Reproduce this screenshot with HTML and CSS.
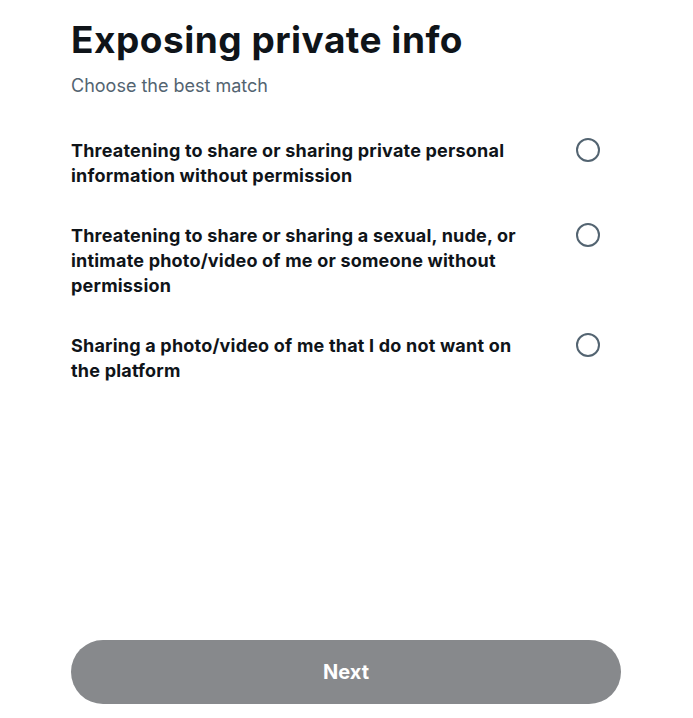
FILE: index.html
```html
<!doctype html>
<html>
<head>
<meta charset="utf-8">
<title>Exposing private info</title>
<link rel="stylesheet" href="styles.css">
</head>
<body>
<div class="page">
	<div class="head">
		<h1 class="title">Exposing private info</h1>
		<p class="sub">Choose the best match</p>
	</div>
	<ul class="opts">
		<li class="opt">
			<span class="txt">Threatening to share or sharing private personal information without permission</span>
			<span class="radio"></span>
		</li>
		<li class="opt">
			<span class="txt">Threatening to share or sharing a sexual, nude, or intimate photo/video of me or someone without permission</span>
			<span class="radio"></span>
		</li>
		<li class="opt">
			<span class="txt">Sharing a photo/video of me that I do not want on the platform</span>
			<span class="radio"></span>
		</li>
	</ul>
	<div class="foot">
		<button class="next">Next</button>
	</div>
</div>
</body>
</html>
```

FILE: styles.css
```css
*{ margin:0; padding:0; list-style:none; box-sizing:border-box;}
body{ background:#fff; font-family:Inter, "Liberation Sans", sans-serif; color:#0f1419;}
.page{ width:550px; height:718px; margin-left:71px; display:flex; flex-direction:column;}
.head{ padding-top:16px;}
.title{ font-size:37px; line-height:48px; font-weight:700; letter-spacing:0.5px;}
.sub{ font-size:18px; line-height:24px; color:#536471; margin-top:10px;}
.opts{ margin-top:40px; display:flex; flex-direction:column; gap:35px;}
.opt{ display:flex; justify-content:space-between; align-items:flex-start;}
.txt{ width:455px; font-size:18px; line-height:25px; font-weight:700; letter-spacing:0.2px;}
.radio{ width:24px; height:24px; border:2px solid #536471; border-radius:50%; margin:0 21px 0 0; flex:none;}
.foot{ margin-top:auto; padding-bottom:14px;}
.next{ width:100%; height:64px; border:0; border-radius:32px; background:#87898c; color:#fff; font-family:inherit; font-size:20px; font-weight:700;}
```
